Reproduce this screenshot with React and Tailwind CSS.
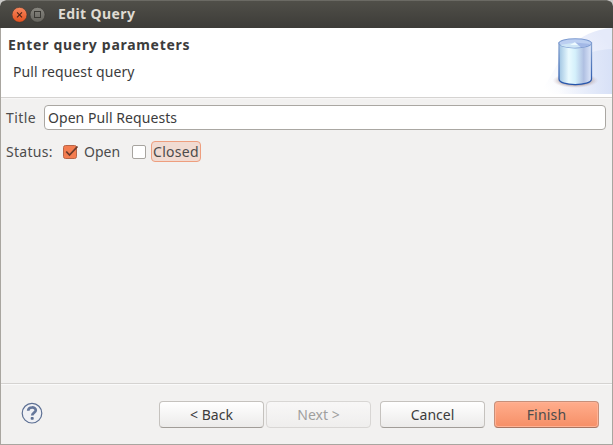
import React from "react";

function TitleBar() {
  return (
    <header className="flex h-7 shrink-0 items-center rounded-t-[6px] border-t border-[#6b6a64] bg-gradient-to-b from-[#504f49] to-[#3d3c38] pl-3">
      <svg width="34" height="16" viewBox="0 0 34 16" className="shrink-0">
        <defs>
          <linearGradient id="close" x1="0" y1="0" x2="0" y2="1">
            <stop offset="0" stopColor="#f6885f" />
            <stop offset="1" stopColor="#e3501e" />
          </linearGradient>
          <linearGradient id="max" x1="0" y1="0" x2="0" y2="1">
            <stop offset="0" stopColor="#888780" />
            <stop offset="1" stopColor="#64635d" />
          </linearGradient>
        </defs>
        <circle cx="7.5" cy="7.8" r="7.5" fill="url(#close)" stroke="#35342f" strokeWidth=".6" />
        <path d="M5 5.3l5 5m0-5l-5 5" stroke="#4b2417" strokeWidth="1.1" />
        <circle cx="25.5" cy="7.8" r="7.5" fill="url(#max)" stroke="#35342f" strokeWidth=".6" />
        <rect x="22.5" y="4.5" width="6" height="6" fill="none" stroke="#3a3934" />
      </svg>
      <h1 className="ml-3 whitespace-nowrap pb-px text-[14px] font-bold leading-none tracking-[0.4px] text-[#dfdbd2]">Edit Query</h1>
    </header>
  );
}

function DatabaseBanner() {
  return (
    <svg width="75" height="66" viewBox="0 0 75 66" className="shrink-0">
      <defs>
        <linearGradient id="body" x1="0" y1="0" x2="1" y2="0">
          <stop offset="0" stopColor="#9fc4e2" />
          <stop offset=".3" stopColor="#eafaff" />
          <stop offset=".5" stopColor="#d4f0fb" />
          <stop offset=".76" stopColor="#b0c0e2" />
          <stop offset="1" stopColor="#dfe8fb" />
        </linearGradient>
        <linearGradient id="edge" x1="0" y1="0" x2="0" y2="1">
          <stop offset="0" stopColor="#8ba6d0" />
          <stop offset="1" stopColor="#2454ac" />
        </linearGradient>
        <linearGradient id="sweep" x1="0" y1="1" x2="1" y2=".3">
          <stop offset="0.1" stopColor="#fff" />
          <stop offset="1" stopColor="#e5eafa" />
        </linearGradient>
        <linearGradient id="sweep2" x1="0" y1="0" x2="1" y2="0">
          <stop offset="0.2" stopColor="#dce5f8" stopOpacity="0" />
          <stop offset="1" stopColor="#d8e1f7" />
        </linearGradient>
        <radialGradient id="shadow">
          <stop offset=".6" stopColor="#a3918f" stopOpacity=".8" />
          <stop offset="1" stopColor="#d9cbd3" stopOpacity="0" />
        </radialGradient>
      </defs>
      <path d="M0 66C12 56 16 40 30 22C43 7 60 1 75 0V66Z" fill="url(#sweep)" />
      <path d="M8 66C28 34 47 22 75 21V66Z" fill="url(#sweep2)" />
      <ellipse cx="38.5" cy="52.5" rx="23" ry="7.5" fill="url(#shadow)" />
      <path d="M22 15V51C22 58.5 54.5 58.5 54.5 51V15Z" fill="url(#body)" stroke="url(#edge)" strokeWidth="1.3" />
      <ellipse cx="38.2" cy="15.3" rx="16.3" ry="4.6" fill="#bccff1" stroke="#7d9bd0" strokeWidth="1.1" />
      <path d="M23 17L38 14.5L44 19.2C36 20.2 28 19.5 23 17Z" fill="#cfe6f6" />
      <path d="M38 14.5L53.5 16C51 18 48 19 44 19.2Z" fill="#a3b8e6" />
      <path d="M33 17L38 14.3L41 17Z" fill="#eefaff" />
    </svg>
  );
}

function Banner() {
  return (
    <section className="flex h-[70px] shrink-0 items-start justify-between border-b border-[#d5d3d1] bg-white text-[#3c3c3c]">
      <div className="pl-[7px] pt-[9px]">
        <h2 className="whitespace-nowrap text-[14px] font-bold leading-4 tracking-[0.7px]">Enter query parameters</h2>
        <p className="mt-[11px] whitespace-nowrap pl-[5px] text-[14px] leading-4 tracking-[0.08px]">Pull request query</p>
      </div>
      <DatabaseBanner />
    </section>
  );
}

function Button({ children, className }) {
  return (
    <button className={`h-[27px] w-[105px] whitespace-nowrap rounded-[4px] border text-[14px] leading-none ${className}`}>
      {children}
    </button>
  );
}

const normal =
  "border-[#c5c2be] border-b-[#a19d98] bg-gradient-to-b from-white to-[#ecebea] text-[#3c3c3c]";

export default function App() {
  return (
    <div className="h-[445px] w-[613px] bg-[#c9c8c6] font-['Noto_Sans','Open_Sans',sans-serif]">
      <main className="flex h-full flex-col overflow-hidden rounded-t-[6px] bg-[#f2f1f0] text-[14px] text-[#4c4c4c]">
        <TitleBar />
        <div className="flex flex-1 flex-col border-x border-b border-[#a9a6a0]">
          <Banner />
          <form className="flex-1 border-t border-[#f7f6f6] pt-1.5">
            <div className="flex h-[25px] items-center pl-[5px] pr-1.5">
              <label htmlFor="title" className="w-[38px] leading-none tracking-[0.4px]">Title</label>
              <input
                id="title"
                defaultValue="Open Pull Requests"
                className="h-[25px] min-w-0 flex-1 rounded-[4px] border border-[#aaa7a2] bg-white px-[3px] leading-5 tracking-[0.06px] text-[#3c3c3c] outline-none"
              />
            </div>
            <div className="mt-[11px] flex h-[21px] items-center whitespace-nowrap pl-[5px] leading-none">
              <span className="w-[56px] tracking-[0.3px]">Status:</span>
              <svg width="18" height="18" viewBox="0 0 18 18">
                <rect x="1.5" y="2.5" width="13" height="13" rx="2" fill="#f47d50" stroke="#b76548" />
                <path d="M4.2 8.5L7.5 12L15.5 3.5" fill="none" stroke="#6b3b2b" strokeWidth="1.8" />
              </svg>
              <span className="ml-[4px] w-[48px]">Open</span>
              <span className="h-[14px] w-[14px] rounded-[2px] border border-[#a7a49f] bg-white" />
              <span className="ml-[5px] flex h-[21px] w-[50px] items-center justify-center rounded-[4px] border border-[#ee9e7e] bg-[#f1dbd2] pt-px tracking-[0.3px]">Closed</span>
            </div>
          </form>
          <footer className="flex h-[61px] shrink-0 items-start border-t border-[#d5d3d1] pl-[20px] pr-[13px] pt-[17px] shadow-[inset_0_1px_0_#fafafa]">
            <svg width="22" height="22" viewBox="0 0 22 22" className="mt-px shrink-0">
              <circle cx="11" cy="11.2" r="9.8" fill="#f0f1f5" stroke="#5c6f93" strokeWidth="1.2" />
              <path d="M7.2 8.8C7.2 4.5 14.8 4.4 14.8 8.3C14.8 10.8 11.2 10.6 11.2 13.6" fill="none" stroke="#65779b" strokeWidth="2.7" />
              <rect x="9.7" y="15.1" width="3" height="2.6" rx=".8" fill="#5c6f93" />
            </svg>
            <div className="ml-auto flex">
              <Button className={normal}>&lt; Back</Button>
              <Button className="ml-[2px] border-[#d8d6d4] bg-gradient-to-b from-[#f8f7f7] to-[#efeeed] text-[#a09f9e]">Next &gt;</Button>
              <Button className={`ml-[9px] ${normal}`}>Cancel</Button>
              <Button className="ml-[9px] border-[#c78f79] border-b-[#a77562] bg-gradient-to-b from-[#ffad8c] to-[#f68f67] tracking-[0.2px] text-[#4c4c4c] shadow-[inset_0_0_0_1px_#ffb295]">Finish</Button>
            </div>
          </footer>
        </div>
      </main>
    </div>
  );
}
